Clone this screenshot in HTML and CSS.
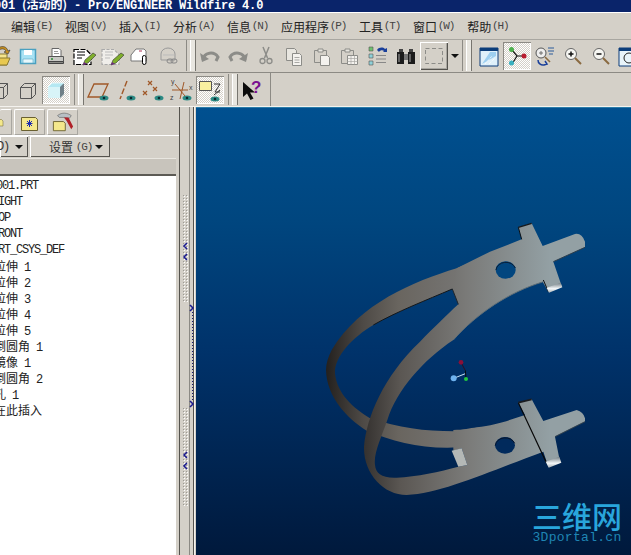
FILE: index.html
```html
<!DOCTYPE html>
<html lang="zh">
<head>
<meta charset="utf-8">
<title>Pro/ENGINEER Wildfire 4.0</title>
<link rel="stylesheet" href="styles.css">
</head>
<body>
<div class="app">
  <header class="titlebar"><div class="title"><span>001 </span><span class="zh">(活动的)</span><span> - Pro/ENGINEER Wildfire 4.0</span></div></header>
  <nav class="menubar">
    <span class="menu"><span class="zh">编辑</span><span class="key">(E)</span></span>
    <span class="menu"><span class="zh">视图</span><span class="key">(V)</span></span>
    <span class="menu"><span class="zh">插入</span><span class="key">(I)</span></span>
    <span class="menu"><span class="zh">分析</span><span class="key">(A)</span></span>
    <span class="menu"><span class="zh">信息</span><span class="key">(N)</span></span>
    <span class="menu"><span class="zh">应用程序</span><span class="key">(P)</span></span>
    <span class="menu"><span class="zh">工具</span><span class="key">(T)</span></span>
    <span class="menu"><span class="zh">窗口</span><span class="key">(W)</span></span>
    <span class="menu"><span class="zh">帮助</span><span class="key">(H)</span></span>
  </nav>

  <div class="toolbar row1">
    <span class="tool"><svg viewBox="0 0 28 28"><path d="M5 12h16v11H5z" fill="#f4e48c" stroke="#8a7a30"/><path d="M5 23l4-7h15l-3 7z" fill="#e8c850" stroke="#8a7a30"/><path d="M12 6c5-3 9-1 10 3l2-1-2 4-4-2 2-1c-1-2-4-3-7-1z" fill="#c89020" stroke="#333" stroke-width=".6"/></svg></span>
    <span class="tool"><svg viewBox="0 0 28 28"><path d="M6.500 7.500h15v14h-15z" fill="#a8e2f4" stroke="#4aa0c0" stroke-width="1.500"/><path d="M10 8h8v5h-8z" fill="#fff"/><path d="M9 17h10v4H9z" fill="#e8f8fc" stroke="#5aa8c4" stroke-width=".6"/></svg></span>
    <span class="tool"><svg viewBox="0 0 28 28"><path d="M10 6.500h7l2 2v7h-9z" fill="#fff" stroke="#666"/><path d="M12 9.500h4M12 11.500h5" stroke="#999"/><path d="M6.500 14.500h15v5h-15z" fill="#c8c8c4" stroke="#555"/><path d="M6.500 19.500h15v2h-15z" fill="#8a8a86" stroke="#444"/><path d="M9 17h2" stroke="#2a8a30" stroke-width="1.500"/></svg></span>
    <span class="tool"><svg viewBox="0 0 28 28"><path d="M4 7.500h12l5 5v10H4z" fill="#fff" stroke="#000" stroke-width="1.200" stroke-dasharray="5 1.500"/><path d="M7 10h8M7 13h8M7 16h5" stroke="#000"/><path d="M13 23l2-5 8-7 3 2-8 8z" fill="#7fae2c" stroke="#333" stroke-width=".6"/><path d="M13 23l1-3 3 2z" fill="#702a80"/></svg></span>
    <span class="tool"><svg viewBox="0 0 28 28"><path d="M4 7.500h12l5 5v10H4z" fill="#f0eeea" stroke="#aaa" stroke-width="1.200" stroke-dasharray="3 1.500"/><path d="M7 10h8M7 13h8M7 16h5" stroke="#bbb"/><path d="M13 23l2-5 8-7 3 2-8 8z" fill="#7fae2c" stroke="#333" stroke-width=".6"/><path d="M13 23l1-3 3 2z" fill="#702a80"/></svg></span>
    <span class="tool"><svg viewBox="0 0 28 28"><path d="M5 13l5-6h8l2 2v10H5z" fill="#fff" stroke="#777"/><path d="M13 9h3" stroke="#b03050"/><rect x="16.500" y="13.500" width="3.500" height="9" rx="1.700" fill="#fff" stroke="#000"/></svg></span>
    <span class="tool"><svg viewBox="0 0 28 28"><path d="M7 18v-6a7 6 0 0 1 14 0v6H7z" fill="#d4d0c8" stroke="#999"/><path d="M9 13h11" stroke="#bbb"/><rect x="13" y="17" width="6" height="4" rx="2" fill="none" stroke="#888"/><rect x="17" y="17" width="6" height="4" rx="2" fill="none" stroke="#888"/></svg></span>
    <span class="sep"></span>
    <span class="tool"><svg viewBox="0 0 28 28"><path d="M7 18c1-8 11-9 15-3l-2 4" fill="none" stroke="#8c8c88" stroke-width="3"/><path d="M4 11l2 9 7-3z" fill="#8c8c88"/></svg></span>
    <span class="tool"><svg viewBox="0 0 28 28"><path d="M21 18c-1-8-11-9-15-3l2 4" fill="none" stroke="#8c8c88" stroke-width="3"/><path d="M24 11l-2 9-7-3z" fill="#8c8c88"/></svg></span>
    <span class="tool"><svg viewBox="0 0 28 28"><path d="M11 5l4.500 11M17 5l-4.500 11" stroke="#8c8c88" stroke-width="1.500"/><circle cx="10.500" cy="19" r="2.500" fill="none" stroke="#8c8c88" stroke-width="1.300"/><circle cx="17.500" cy="19" r="2.500" fill="none" stroke="#8c8c88" stroke-width="1.300"/></svg></span>
    <span class="tool"><svg viewBox="0 0 28 28"><path d="M6.500 6.500h8l2 2v10h-10z" fill="#e8e6e0" stroke="#8c8c88"/><path d="M12.500 11.500h7l2 2v10h-9z" fill="#f4f2ee" stroke="#8c8c88"/><path d="M14.500 15.500h5M14.500 18h5M14.500 20.500h5" stroke="#a8a8a4"/></svg></span>
    <span class="tool"><svg viewBox="0 0 28 28"><path d="M6.500 8.500h12v12h-12z" fill="#d4d0c8" stroke="#8c8c88"/><path d="M10 7h5v3h-5z" fill="#e8e6e0" stroke="#8c8c88"/><path d="M12.500 13.500h7l2 2v8h-9z" fill="#f4f2ee" stroke="#8c8c88"/></svg></span>
    <span class="tool"><svg viewBox="0 0 28 28"><path d="M5.500 8.500h12v13h-12z" fill="#d4d0c8" stroke="#8c8c88"/><path d="M9 7h5v3H9z" fill="#e8e6e0" stroke="#8c8c88"/><path d="M11.500 13.500h10v9h-10z" fill="#f4f2ee" stroke="#8c8c88"/><path d="M11.500 16.500h10M11.500 19.500h10M15 13.500v9M18.500 13.500v9" stroke="#a8a8a4" stroke-width=".7"/></svg></span>
    <span class="tool"><svg viewBox="0 0 28 28"><path d="M5 5h4v4H5z" fill="#6fc06f" stroke="#555" stroke-width=".6"/><path d="M5 12h4v4H5z" fill="#8fd0d8" stroke="#555" stroke-width=".6"/><path d="M5 19h4v4H5z" fill="#8fd0d8" stroke="#555" stroke-width=".6"/><path d="M12 13.500h10M12 17h10M12 20.500h10" stroke="#888"/><path d="M13 8c2-3 6-3 8-1l2-1v4h-4l1-1c-1-1-4-1-5 1z" fill="#1a3f9a"/></svg></span>
    <span class="tool"><svg viewBox="0 0 28 28"><path d="M5 10h7v12H5zM16 10h7v12h-7z" fill="#1c1c1c"/><path d="M7 7h4v3H7zM17 7h4v3h-4z" fill="#444"/><path d="M12 12h4v6h-4z" fill="#777"/><path d="M7 12v8M18 12v8" stroke="#aaa"/></svg></span>
    <span class="tool raised"><svg viewBox="0 0 28 28"><path d="M5.500 6.500h17v15h-17z" fill="none" stroke="#8c8c88" stroke-dasharray="4 2.500"/></svg></span>
    <span class="drop"><i class="tri"></i></span>
    <span class="sep sep-end"></span>
    <span class="tool"><svg viewBox="0 0 28 28"><path d="M5 6h18v18H5z" fill="#dff0fa" stroke="#0c3d7a" stroke-width="1"/><path d="M5 6h18v3H5z" fill="#0c3d7a"/><path d="M7 22l8-12h6v4z" fill="#9ecff0"/><path d="M10 22l7-8M14 22l6-6" stroke="#fff" stroke-dasharray="1 1"/></svg></span>
    <span class="tool active"><svg viewBox="0 0 28 28"><path d="M9 8l5 6 8 0M14 14l-5 8" fill="none" stroke="#111" stroke-width="1.200"/><circle cx="8.500" cy="7.500" r="2.500" fill="#4caf4c"/><circle cx="21" cy="14" r="2.500" fill="#b81c30"/><circle cx="8.500" cy="21" r="2.500" fill="#38b0c0"/></svg></span>
    <span class="tool"><svg viewBox="0 0 28 28"><circle cx="10" cy="11" r="5" fill="#eee" stroke="#555"/><path d="M8 11h4M10 9v4" stroke="#555" stroke-width=".8"/><path d="M14 15l5 5" stroke="#8a6a40" stroke-width="1.600"/><path d="M17 6h6M17 9h6M18 12h4" stroke="#2a5a9a"/><path d="M7 18a5 5 0 0 0 6 5l3-1-2-3" fill="none" stroke="#1a3f9a" stroke-width="1.500"/></svg></span>
    <span class="tool"><svg viewBox="0 0 28 28"><circle cx="12" cy="12" r="5.500" fill="#f6f6f2" stroke="#666"/><path d="M9.500 12h5M12 9.500v5" stroke="#111" stroke-width="1.500"/><path d="M16 16l6 6" stroke="#8a6a40" stroke-width="2"/></svg></span>
    <span class="tool"><svg viewBox="0 0 28 28"><circle cx="12" cy="12" r="5.500" fill="#f6f6f2" stroke="#666"/><path d="M9.500 12h5" stroke="#111" stroke-width="1.500"/><path d="M16 16l6 6" stroke="#8a6a40" stroke-width="2"/></svg></span>
    <span class="tool"><svg viewBox="0 0 28 28"><path d="M4 6h20v18H4z" fill="#e8f4fa" stroke="#0c3d7a"/><path d="M4 6h20v3H4z" fill="#0c3d7a"/><circle cx="14" cy="16" r="5" fill="none" stroke="#222"/></svg></span>
  </div>

  <div class="toolbar row2">
    <div class="group">
      <span class="tool"><svg viewBox="0 0 28 28"><path d="M6.500 11.500l4-4h11v11l-4 4h-11z" fill="none" stroke="#555"/><path d="M6.500 11.500h11v11M17.500 11.500l4-4" fill="none" stroke="#555"/></svg></span>
      <span class="tool"><svg viewBox="0 0 28 28"><path d="M6.500 11.500l4-4h11v11l-4 4h-11z" fill="none" stroke="#555"/><path d="M6.500 11.500h11v11M17.500 11.500l4-4" fill="none" stroke="#555"/></svg></span>
      <span class="tool active"><svg viewBox="0 0 28 28"><path d="M6 11l4-4h12v11l-4 4H6z" fill="#b5e8f2"/><path d="M6 11h12v11H6z" fill="#d8f4f8"/><path d="M18 11l4-4v11l-4 4z" fill="#6f7f86"/><path d="M6 11l4-4h12" fill="none" stroke="#e8f8fa"/></svg></span>
      <span class="sep"></span>
      <span class="tool"><svg viewBox="0 0 28 28"><path d="M4 21l6-13h14l-6 13z" fill="none" stroke="#a05828" stroke-width="1.300"/><ellipse cx="20" cy="22" rx="4.500" ry="2.500" fill="#2c8a84"/><circle cx="20" cy="22" r="1.300" fill="#0a2a30"/></svg></span>
      <span class="tool"><svg viewBox="0 0 28 28"><path d="M15 5l-7 18" stroke="#a05828" stroke-width="1.400" stroke-dasharray="6 2"/><ellipse cx="19" cy="22" rx="4.500" ry="2.500" fill="#2c8a84"/><circle cx="19" cy="22" r="1.300" fill="#0a2a30"/></svg></span>
      <span class="tool"><svg viewBox="0 0 28 28"><path d="M8 5l4 4M12 5l-4 4M13 11l4 4M17 11l-4 4M3 15l4 4M7 15l-4 4" stroke="#a05828" stroke-width="1.200"/><ellipse cx="19" cy="22" rx="4.500" ry="2.500" fill="#2c8a84"/><circle cx="19" cy="22" r="1.300" fill="#0a2a30"/></svg></span>
      <span class="tool"><svg viewBox="0 0 28 28"><path d="M4 14h16M16 6l-4 17M7 8l10 12" stroke="#a05828"/><text class="axis" x="3" y="8">y</text><text class="axis" x="2" y="24">z</text><text class="axis" x="21" y="14">x</text><ellipse cx="19" cy="22" rx="4.500" ry="2.500" fill="#2c8a84"/><circle cx="19" cy="22" r="1.300" fill="#0a2a30"/></svg></span>
      <span class="tool active"><svg viewBox="0 0 28 28"><path d="M3.500 5.500h12v9h-12z" fill="#f8f0a0" stroke="#555"/><path d="M18 8h6l-5 8h5" fill="none" stroke="#333"/><path d="M24 14l-6 5" stroke="#333"/><ellipse cx="19" cy="23" rx="4.500" ry="2.500" fill="#2c8a84"/><circle cx="19" cy="23" r="1.300" fill="#0a2a30"/></svg></span>
      <span class="sep"></span>
      <span class="tool"><svg viewBox="0 0 28 28"><path d="M5 6v15l4-3.500 3.500 6.500 3-1.500-3.500-6h5z" fill="#0c0c0c"/><text class="help" x="13" y="17">?</text></svg></span>
    </div>
  </div>

  <main class="workspace">
    <aside class="leftcol">
      <section class="panel">
        <div class="tabs">
          <span class="tab tab-a"><svg viewBox="0 0 22 22"><path d="M-9 6h12l3 3v10H-9z" fill="#f4e88c" stroke="#6a6030"/></svg></span>
          <span class="tab"><svg viewBox="0 0 24 22"><path d="M3.500 6.500h14l2 2v11h-16z" fill="#f4e88c" stroke="#6a6030"/><path d="M11.500 9v7M8.500 12.500h6M9 10l5 5M14 10l-5 5" stroke="#1a2ab0"/></svg></span>
          <span class="tab"><svg viewBox="0 0 26 24"><path d="M2.500 11.500h11l2 2v8h-13z" fill="#f4e88c" stroke="#6a6030"/><path d="M7 5c5-4 11-3 15 0l-2 3-5-1-6 0z" fill="#b8c0c4" stroke="#555" stroke-width=".6"/><path d="M14 7l5 0 5 10-2 3-5-9z" fill="#b02028"/></svg></span>
        </div>
        <div class="btnrow">
          <button class="btn btn-a" type="button"><span class="lat">D)</span><i class="tri"></i></button>
          <button class="btn btn-b" type="button"><span class="zh">设置</span><span class="key">(G)</span><i class="tri"></i></button>
        </div>
        <div class="head"></div>
        <ul class="tree">
          <li class="first"><span class="lat">001.PRT</span></li>
          <li class="latrow"><span class="lat">RIGHT</span></li>
          <li class="latrow"><span class="lat">TOP</span></li>
          <li class="latrow"><span class="lat">FRONT</span></li>
          <li class="latrow"><span class="lat">PRT_CSYS_DEF</span></li>
          <li><span class="zh">拉伸</span><span class="lat"> 1</span></li>
          <li><span class="zh">拉伸</span><span class="lat"> 2</span></li>
          <li><span class="zh">拉伸</span><span class="lat"> 3</span></li>
          <li><span class="zh">拉伸</span><span class="lat"> 4</span></li>
          <li><span class="zh">拉伸</span><span class="lat"> 5</span></li>
          <li><span class="zh">倒圆角</span><span class="lat"> 1</span></li>
          <li><span class="zh">镜像</span><span class="lat"> 1</span></li>
          <li><span class="zh">倒圆角</span><span class="lat"> 2</span></li>
          <li><span class="zh">孔</span><span class="lat"> 1</span></li>
          <li><span class="zh">在此插入</span></li>
        </ul>
      </section>
      <div class="sash">
        <svg viewBox="180 107 16 448">
          <defs><pattern id="dots" width="3" height="3" patternUnits="userSpaceOnUse"><rect width="3" height="3" fill="#d4d0c8"/><rect width="1" height="1" fill="#9c9a94"/><rect x="1" y="1" width="1" height="1" fill="#fff"/></pattern></defs>
          <path d="M189.500 107v448" stroke="#8c8a84"/>
          <path d="M193.500 107v448" stroke="#55534e"/>
          <path d="M194.500 107v448" stroke="#f4f2ee"/>
          <rect x="183" y="194" width="5" height="109" fill="url(#dots)"/>
          <rect x="183" y="408" width="5" height="98" fill="url(#dots)"/>
          <path d="M192.500 312v90" stroke="#1a1a70" stroke-dasharray="1 2"/>
          <g fill="none" stroke="#1a1a90" stroke-width="1.500">
            <path d="M187 243l-3 3 3 3M187 254l-3 3 3 3M187 452l-3 3 3 3M187 463l-3 3 3 3"/>
            <path d="M190 305l3 3-3 3M190 401l3 3-3 3"/>
          </g>
        </svg>
      </div>
    </aside>
    <section class="canvas">
      <svg class="model" viewBox="196 108 435 447">
        <defs>
          <linearGradient id="front" gradientUnits="userSpaceOnUse" x1="160" y1="0" x2="720" y2="0">
            <stop offset="0" stop-color="#34312f"/><stop offset=".2" stop-color="#5b5753"/><stop offset=".55" stop-color="#7a7a78"/><stop offset="1" stop-color="#93a0a4"/>
          </linearGradient>
          <linearGradient id="rear" gradientUnits="userSpaceOnUse" x1="50" y1="0" x2="440" y2="0">
            <stop offset="0" stop-color="#24211f"/><stop offset=".28" stop-color="#4e4a46"/><stop offset=".55" stop-color="#69655f"/><stop offset="1" stop-color="#757472"/>
          </linearGradient>
          <linearGradient id="shine" x1="0" y1="0" x2="0" y2="1">
            <stop offset="0" stop-color="#6f7a80"/><stop offset=".6" stop-color="#f4f8fa"/><stop offset="1" stop-color="#a8b0b4"/>
          </linearGradient>
        </defs>
        <g transform="translate(310 210) scale(.33333)">
          <path d="M470 162L440 175C310 215 150 280 65 420C55 440 48 460 48 480C50 560 110 625 170 662C250 695 340 718 445 712L445 664C350 665 270 655 180 625C130 595 80 550 75 490C72 440 130 380 190 345C260 305 350 270 427 237L470 230Z" fill="url(#rear)"/>
          <path d="M625 52L665 40L698 108L795 72Q815 68 825 95L825 112L730 155L755 228L715 245L698 215C600 245 500 310 430 390C340 450 260 540 232 630C215 680 190 730 195 765C197 790 215 805 260 803C320 800 390 785 445 770L472 765L455 715L430 722L430 660C460 660 480 655 500 652C560 645 600 630 645 615L625 578L665 568L700 633L800 600Q820 605 825 625L825 635L735 680L750 755L715 770L700 725C560 775 400 850 290 855C220 855 160 790 162 710C170 620 220 500 330 395C370 355 410 315 445 283L427 237L440 175L540 125L635 88Z" fill="url(#front)"/>
          <path d="M425 722L455 715L472 765L445 770Z" fill="#b4b8b6"/>
          <ellipse cx="587" cy="180" rx="30" ry="26" fill="#02467f"/>
          <path d="M558 180a30 26 0 0 1 58 -6" fill="none" stroke="#0a1e36" stroke-width="3"/>
          <ellipse cx="585" cy="706" rx="30" ry="25" fill="#012a5c"/>
          <path d="M556 706a30 25 0 0 1 58 -6" fill="none" stroke="#06142c" stroke-width="3"/>
          <path d="M625 578L710 760" stroke="#060606" stroke-width="3.500"/>
          <path d="M625 52L665 40" stroke="#15181c" stroke-width="4"/>
          <path d="M625 578L665 568" stroke="#1a1c20" stroke-width="5"/>
          <path d="M625 52L635 88M700 210L715 245" stroke="#0a1016" stroke-width="3"/>
          <path d="M427 237C350 270 260 305 190 345" fill="none" stroke="#12161a" stroke-width="3"/>
          <path d="M427 237L445 283" stroke="#20262c" stroke-width="3"/>
          <path d="M710 233L752 218L757 232L717 248Z" fill="url(#shine)"/>
          <path d="M707 755L748 740L754 758L716 773Z" fill="url(#shine)"/>
          <path d="M698 216C600 245 500 310 430 390" fill="none" stroke="#5f6e76" stroke-width="3"/>
          <path d="M730 155L825 112M735 680L825 635" stroke="#2c3c4a" stroke-width="3"/>
          <path d="M453 457L465 480" stroke="#300c20" stroke-width="3"/>
          <circle cx="453" cy="457" r="7" fill="#8a1038"/>
          <path d="M431 505L466 491" stroke="#c8e4f8" stroke-width="3"/>
          <path d="M466 481L468 505" stroke="#0a0a0a" stroke-width="3"/>
          <circle cx="431" cy="505" r="9" fill="#6eb2ee"/>
          <circle cx="468" cy="507" r="6" fill="#22c840"/>
        </g>
      </svg>
      <div class="logo">
        <div class="logo-zh">三维网</div>
        <div class="logo-en">3Dportal.cn</div>
      </div>
    </section>
  </main>
</div>
</body>
</html>
```
FILE: styles.css
```css
* { box-sizing: border-box; }
html, body { margin: 0; height: 100%; overflow: hidden; background: #d4d0c8; }
.app {
  width: 631px; height: 555px; display: flex; flex-direction: column; overflow: hidden;
  font-family: "Liberation Mono", "Noto Sans CJK SC", monospace; font-size: 12px; color: #111;
}
.zh { font-family: "Noto Sans CJK SC", sans-serif; letter-spacing: 0; }
.lat { letter-spacing: -1.2px; white-space: pre; }

.titlebar { height: 13px; flex: none; background: #0a246a; border-bottom: 1px solid #fff; overflow: hidden; }
.title { margin: -3px 0 0 -6px; line-height: 14px; font-weight: bold; color: #fff; white-space: pre; letter-spacing: -.2px; }
.title .zh { font-size: 12px; font-weight: 700; letter-spacing: 0; }

.menubar { height: 27px; flex: none; display: flex; align-items: center; gap: 12px; padding-left: 11px; border-bottom: 1px solid #a8a6a0; }
.menu { display: flex; align-items: center; white-space: nowrap; color: #222; }
.key { width: 18px; font-size: 11px; letter-spacing: -1.1px; text-align: center; color: #444; font-weight: 400; }

.toolbar { flex: none; display: flex; align-items: center; }
.row1 { height: 33px; margin-left: -14px; padding-bottom: 1px; border-bottom: 1px solid #8c8a84; width: 660px; }
.row2 { height: 34px; border-bottom: 1px solid #f4f2ee; }
.group { height: 33px; display: flex; align-items: center; margin-left: -14px; padding-right: 4px; border-right: 1px solid #8c8a84; }
.tool { flex: none; width: 28px; height: 28px; display: block; }
.tool svg { display: block; width: 28px; height: 28px; }
.active { background: repeating-conic-gradient(#fff 0 25%, #d4d0c8 0 50%) 0 0 / 2px 2px; box-shadow: inset 1px 1px 0 #8c8a84, inset -1px -1px 0 #fff; }
.raised { background: #d4d0c8; box-shadow: inset 1px 1px 0 #fff, inset -1px -1px 0 #55534e, inset -2px -2px 0 #a8a6a0; }
.drop { flex: none; width: 14px; display: flex; justify-content: center; }
.tri { display: block; flex: none; width: 0; height: 0; border: solid transparent; border-width: 4px 4px 0; border-top-color: #111; }
.sep { flex: none; width: 14px; height: 31px; display: flex; gap: 3px; padding-left: 4px; }
.sep::before { content: ""; width: 1px; background: #8c8a84; }
.sep::after { content: ""; width: 4px; background: #e8e6e0; border-right: 1px solid #77756f; border-left: 1px solid #fff; }
.sep-end { width: 13px; padding-left: 0; }
.axis { font: 7px "Liberation Sans", sans-serif; fill: #444; }
.help { font: bold 17px "Liberation Sans", sans-serif; fill: #7a1090; }

.workspace { flex: 1; min-height: 0; display: flex; }
.leftcol { flex: none; width: 196px; display: flex; }
.panel { flex: none; width: 180px; display: flex; flex-direction: column; min-height: 0; border-right: 1px solid #55534e; }
.tabs { height: 29px; flex: none; display: flex; gap: 2px; padding-top: 2px; border-bottom: 1px solid #fff; }
.tab { flex: none; width: 31px; height: 26px; display: flex; align-items: center; justify-content: center; border: 1px solid #a8a6a0; border-top-color: #fff; border-left-color: #fff; border-radius: 2px 2px 0 0; }
.tab svg { width: 24px; height: 22px; display: block; }
.tab-a { width: 12px; overflow: hidden; border-left: 0; }
.btnrow { height: 22px; flex: none; display: flex; gap: 2px; }
.btn { height: 21px; padding: 0; display: flex; align-items: center; background: #d4d0c8; border: 0; box-shadow: inset 1px 1px 0 #fff, inset -1px -1px 0 #55534e; font: inherit; color: #333; }
.btn-a { width: 28px; padding-left: 0; }
.btn-a .lat { margin-left: -3px; }
.btn-a .tri { margin-left: 6px; }
.btn-b { width: 80px; padding-left: 19px; }
.btn-b .key { margin-left: 2px; }
.btn-b .tri { margin-left: 2px; }
.head { height: 18px; flex: none; width: 176px; background: #c8c4bc; border-bottom: 2px solid #5c5a54; box-shadow: inset 0 1px 0 #e8e6e0; }
.tree { flex: 1; width: 176px; margin: 0; padding: 2px 0 0; list-style: none; background: #fff; overflow: hidden; }
.tree li { height: 16px; line-height: 16px; margin-left: -6px; white-space: pre; color: #222; }
.tree .first { margin-left: -4px; }
.tree .latrow { margin-left: -8px; }
.sash { flex: none; width: 16px; }
.sash svg { display: block; width: 16px; height: 448px; }

.canvas { flex: 1; min-width: 0; position: relative; background: linear-gradient(180deg, #005090 0%, #00467f 25%, #00326a 55%, #00193c 100%); border-top: 1px solid #2a7ca8; overflow: hidden; }
.model { display: block; width: 435px; height: 447px; }
.logo { position: absolute; left: 334px; top: 392px; width: 94px; text-align: center; color: #29a6dc; }
.logo-zh { font: 500 30px/30px "Noto Sans CJK SC", sans-serif; white-space: nowrap; }
.logo-en { font: 400 13px/15px "Liberation Mono", monospace; letter-spacing: .3px; color: #1f86b4; white-space: nowrap; }
```
